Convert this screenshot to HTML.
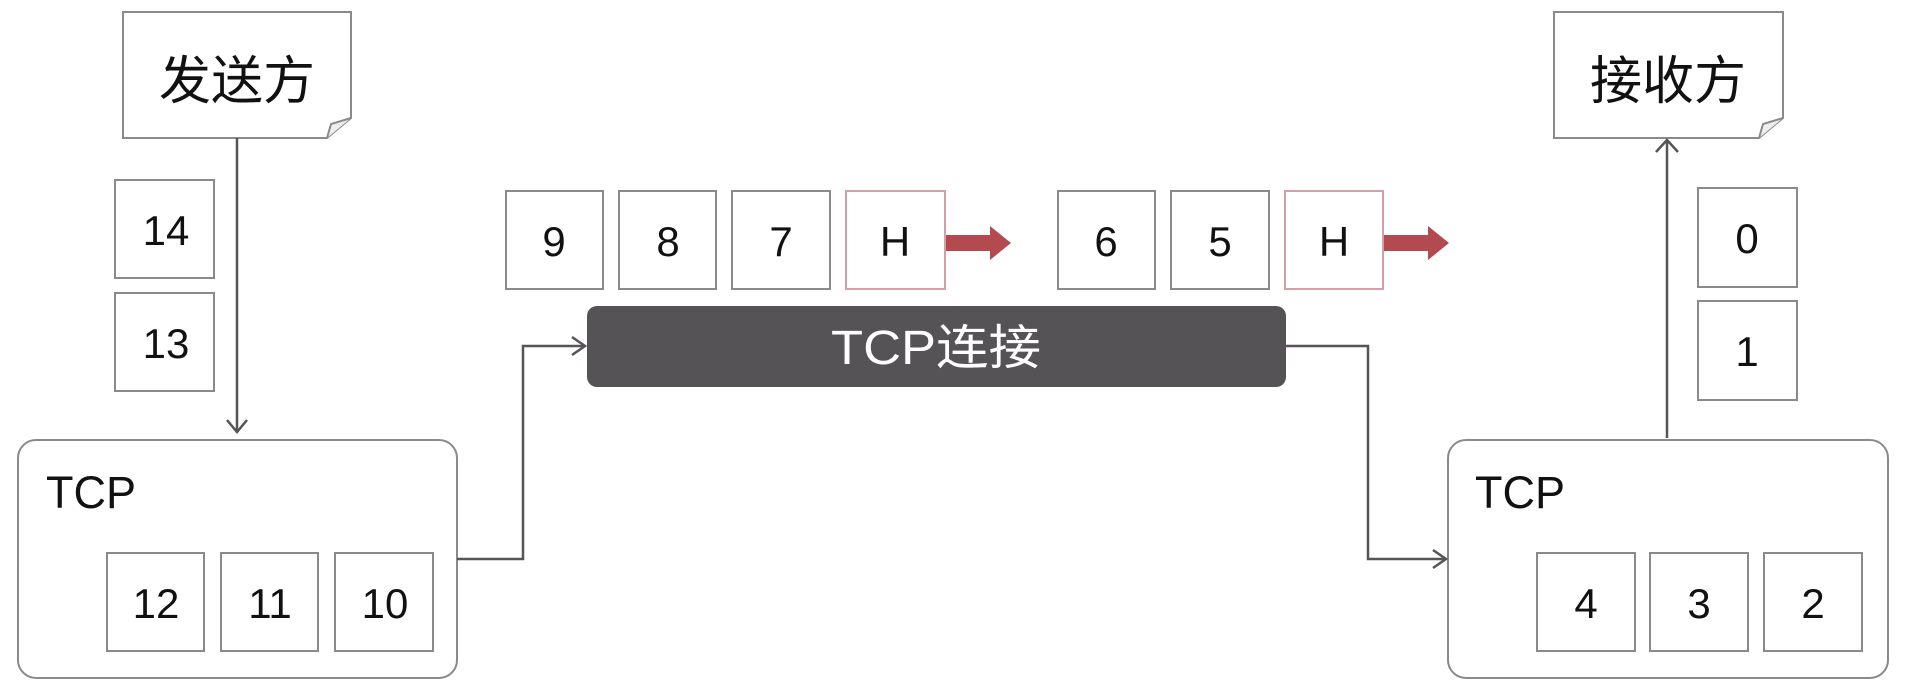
<!DOCTYPE html>
<html><head><meta charset="utf-8"><style>
html,body{margin:0;padding:0;background:#fff;}
svg{display:block}
text{font-family:"Liberation Sans","Noto Sans CJK SC",sans-serif;fill:#111}
</style></head><body>
<svg width="1906" height="694" viewBox="0 0 1906 694" xmlns="http://www.w3.org/2000/svg">
<g fill="none" stroke="#8a8a8a" stroke-width="2">
<path d="M123 12 H351 V118 L327 138 H123 Z"/>
<path d="M327 138 L331 124 L351 118" fill="#eee"/>
<path d="M1554 12 H1783 V118 L1759 138 H1554 Z"/>
<path d="M1759 138 L1763 124 L1783 118" fill="#eee"/>
<rect x="115" y="180" width="99" height="98"/>
<rect x="115" y="293" width="99" height="98"/>
<rect x="18" y="440" width="439" height="238" rx="18"/>
<rect x="107" y="553" width="97" height="98"/>
<rect x="221" y="553" width="97" height="98"/>
<rect x="335" y="553" width="98" height="98"/>
<rect x="506" y="191" width="97" height="98"/>
<rect x="619" y="191" width="97" height="98"/>
<rect x="732" y="191" width="98" height="98"/>
<rect x="1058" y="191" width="97" height="98"/>
<rect x="1171" y="191" width="98" height="98"/>
<rect x="1698" y="188" width="99" height="99"/>
<rect x="1698" y="301" width="99" height="99"/>
<rect x="1448" y="440" width="440" height="238" rx="18"/>
<rect x="1537" y="553" width="98" height="98"/>
<rect x="1650" y="553" width="98" height="98"/>
<rect x="1764" y="553" width="98" height="98"/>
</g>
<g fill="none" stroke="#d4a0a8" stroke-width="2">
<rect x="846" y="191" width="99" height="98"/>
<rect x="1285" y="191" width="98" height="98"/>
</g>
<g fill="#b24a50">
<path d="M946 235 H990 V226 L1011 243 L990 260 V251 H946 Z"/>
<path d="M1384 235 H1428 V226 L1449 243 L1428 260 V251 H1384 Z"/>
</g>
<g fill="none" stroke="#555" stroke-width="2.5">
<path d="M237 138 V432"/><path d="M227 420 L237 432 L247 420"/>
<path d="M457 559 H523 V346 H585"/><path d="M572 337 L585 346 L572 355"/>
<path d="M1286 346 H1368 V559 H1446"/><path d="M1433 550 L1446 559 L1433 568"/>
<path d="M1667 438 V140"/><path d="M1656 152 L1667 140 L1678 152"/>
</g>
<rect x="587" y="306" width="699" height="81" rx="10" fill="#555356"/>
<text x="936" y="364" text-anchor="middle" font-size="48" style="fill:#fff" textLength="210" lengthAdjust="spacingAndGlyphs">TCP连接</text>
<text x="237" y="99" text-anchor="middle" font-size="52">发送方</text>
<text x="1668" y="99" text-anchor="middle" font-size="52">接收方</text>
<text x="46" y="508" font-size="45">TCP</text>
<text x="1475" y="508" font-size="45">TCP</text>
<g font-size="42" text-anchor="middle">
<text x="166" y="245">14</text>
<text x="166" y="358">13</text>
<text x="156" y="618">12</text>
<text x="270" y="618">11</text>
<text x="385" y="618">10</text>
<text x="554" y="256">9</text>
<text x="668" y="256">8</text>
<text x="781" y="256">7</text>
<text x="895" y="256">H</text>
<text x="1106" y="256">6</text>
<text x="1220" y="256">5</text>
<text x="1334" y="256">H</text>
<text x="1747" y="253">0</text>
<text x="1747" y="366">1</text>
<text x="1586" y="618">4</text>
<text x="1699" y="618">3</text>
<text x="1813" y="618">2</text>
</g>
</svg>
</body></html>
